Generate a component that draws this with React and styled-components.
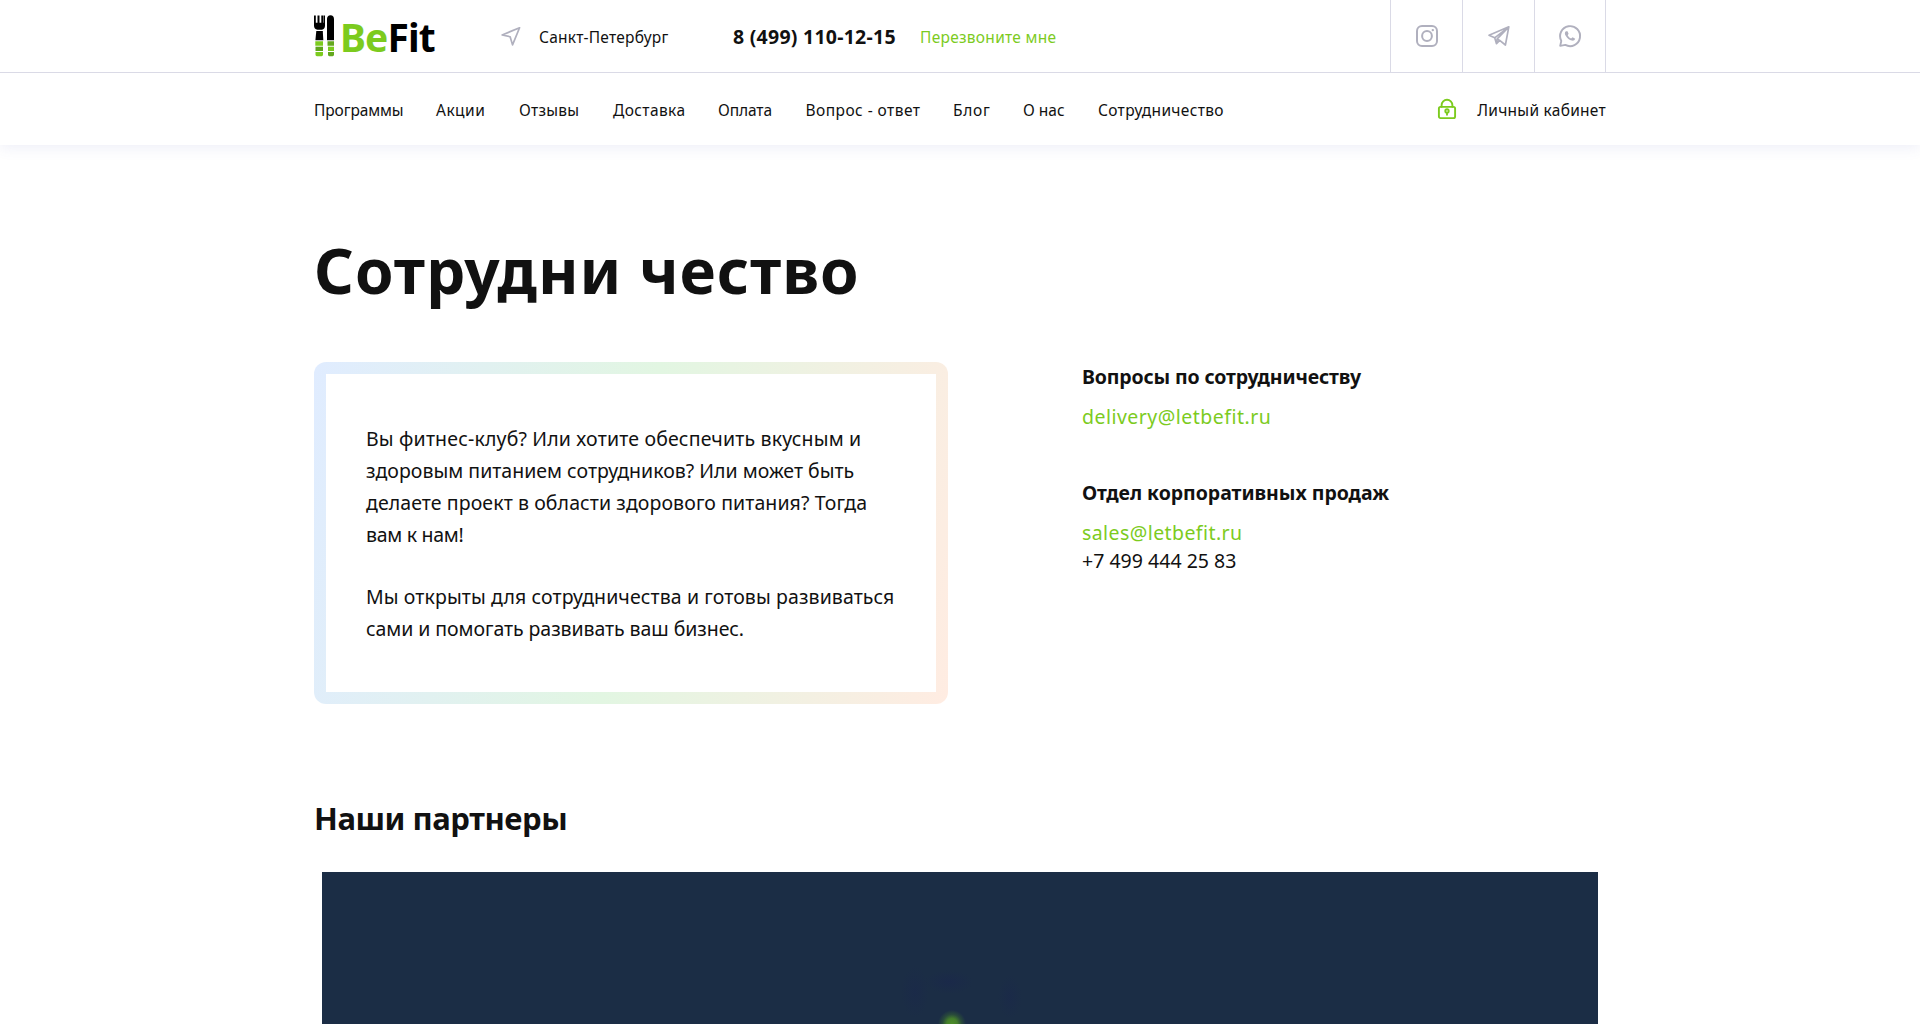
import React from "react";
import styled, { createGlobalStyle } from "styled-components";

const green = "#7ccb1e";
const ink = "#111111";
const muted = "#b0b0be";
const line = "#dadae6";

const GlobalStyle = createGlobalStyle`
  * { box-sizing: border-box; }
  html { overflow: hidden; }
  body {
    margin: 0;
    height: 1024px;
    overflow: hidden;
    background: #fff;
    color: ${ink};
    font-family: "Noto Sans", "Open Sans", sans-serif;
  }
  h1, h2, h3, p { margin: 0; }
  a { color: inherit; text-decoration: none; }
`;

const Header = styled.header`
  height: 145px;
  background: #fff;
  box-shadow: 0 2px 14px rgba(80, 90, 180, 0.11);
`;

const Container = styled.div`
  width: 1292px;
  margin: 0 auto;
`;

const TopBar = styled.div`
  height: 73px;
  border-bottom: 1px solid ${line};
`;

const TopInner = styled(Container)`
  display: flex;
  align-items: center;
  height: 72px;
`;

const Logo = styled.a`
  display: flex;
  align-items: center;
  width: 187px;
`;

const Cutlery = styled.svg`
  display: block;
  flex: none;
  width: 21px;
  height: 42px;
  margin-right: 5px;
`;

const LogoWord = styled.span`
  padding-top: 1px;
  font-size: 39px;
  line-height: 42px;
  font-weight: 700;
  letter-spacing: -0.9px;
  color: ${(p) => p.$color};
`;

const City = styled.span`
  width: 190px;
  margin-left: 18px;
  padding-top: 2px;
  font-size: 15.5px;
  line-height: 24px;
  letter-spacing: 0.25px;
  white-space: nowrap;
`;

const Phone = styled.a`
  width: 187px;
  margin-left: 4px;
  padding-top: 2px;
  font-size: 19.5px;
  line-height: 24px;
  font-weight: 700;
  letter-spacing: 0.25px;
  white-space: nowrap;
`;

const Callback = styled.a`
  padding-top: 2px;
  font-size: 15.5px;
  line-height: 24px;
  letter-spacing: 0.28px;
  color: ${green};
`;

const Socials = styled.div`
  display: flex;
  height: 72px;
  margin-left: auto;
  border-right: 1px solid ${line};
`;

const Social = styled.a`
  display: flex;
  align-items: center;
  justify-content: center;
  width: ${(p) => p.$width || 72}px;
  border-left: 1px solid ${line};
`;

const Icon = styled.svg`
  display: block;
  flex: none;
  overflow: visible;
  fill: none;
  stroke: ${(p) => p.$color || muted};
  stroke-width: ${(p) => p.$stroke || 2}px;
  stroke-linejoin: round;
  stroke-linecap: round;
`;

const NavBar = styled(Container)`
  display: flex;
  align-items: center;
  height: 72px;
`;

const Nav = styled.nav`
  display: flex;
  gap: 33px;
`;

const NavLink = styled.a`
  width: ${(p) => p.$width}px;
  padding-top: 2px;
  font-size: 15.5px;
  line-height: 24px;
  letter-spacing: ${(p) => p.$track || 0}px;
  white-space: nowrap;
`;

const Account = styled.a`
  display: flex;
  align-items: center;
  gap: 21px;
  margin-left: auto;
  font-size: 15.5px;
  line-height: 24px;
  letter-spacing: 0.27px;
`;

const AccountLabel = styled.span`
  padding-top: 2px;
`;

const Title = styled.h1`
  padding-top: 85px;
  margin-bottom: 52px;
  font-size: 62px;
  line-height: 80px;
  font-weight: 700;
  letter-spacing: 0.9px;
`;

const Columns = styled.div`
  display: flex;
  gap: 134px;
  height: 342px;
`;

const Card = styled.section`
  width: 634px;
  padding: 12px;
  border-radius: 12px;
  background: linear-gradient(100deg, #e0ecff 0%, #e2f6e2 50%, #ffece2 100%);
`;

const CardBody = styled.div`
  display: flex;
  flex-direction: column;
  gap: 30px;
  height: 318px;
  padding: 49px 0 0 40px;
  background: #fff;
`;

const Paragraph = styled.p`
  font-size: 19.5px;
  line-height: 32px;
`;

const TextLine = styled.span`
  display: block;
  letter-spacing: ${(p) => p.$track || 0}px;
  white-space: nowrap;
`;

const Contacts = styled.aside`
  display: flex;
  flex-direction: column;
  gap: 48px;
  padding-top: 1px;
  font-size: 19.5px;
  line-height: 28px;
`;

const ContactTitle = styled.h3`
  margin-bottom: 12px;
  font-size: inherit;
  font-weight: 700;
  letter-spacing: ${(p) => p.$track || 0}px;
`;

const ContactLine = styled.a`
  display: block;
  letter-spacing: ${(p) => p.$track || 0}px;
  color: ${(p) => p.$color || ink};
`;

const Subtitle = styled.h2`
  margin: 94px 0 34px;
  font-size: 31px;
  line-height: 40px;
  font-weight: 700;
  letter-spacing: -0.45px;
`;

const Partner = styled.div`
  height: 152px;
  margin: 0 8px;
  background:
    radial-gradient(circle 14px at 630px 152px, #4d8d29 0%, #457f2b 38%, rgba(50, 94, 52, 0.6) 68%, rgba(28, 45, 69, 0) 100%),
    radial-gradient(ellipse 14px 26px at 593px 120px, rgba(26, 40, 74, 0.6), rgba(26, 40, 74, 0)),
    radial-gradient(ellipse 24px 12px at 627px 110px, rgba(26, 40, 74, 0.8), rgba(26, 40, 74, 0)),
    radial-gradient(ellipse 12px 22px at 688px 125px, rgba(26, 40, 74, 0.6), rgba(26, 40, 74, 0)),
    #1b2d45;
`;

const navItems = [
  ["Программы", 89, -0.1],
  ["Акции", 50, 0.5],
  ["Отзывы", 61, 0.25],
  ["Доставка", 72, 0.4],
  ["Оплата", 54.5, -0.1],
  ["Вопрос - ответ", 114.5, 0.45],
  ["Блог", 37, 0.7],
  ["О нас", 42, 0],
  ["Сотрудничество", 126, 0.32],
];

const paragraphs = [
  [
    ["Вы фитнес-клуб? Или хотите обеспечить вкусным и", 0.17],
    ["здоровым питанием сотрудников? Или может быть", 0.01],
    ["делаете проект в области здорового питания? Тогда", 0.09],
    ["вам к нам!", -0.3],
  ],
  [
    ["Мы открыты для сотрудничества и готовы развиваться", 0.1],
    ["сами и помогать развивать ваш бизнес.", -0.07],
  ],
];

function CutleryMark() {
  return (
    <Cutlery viewBox="0 0 21 42">
      <path d="M0 .5h1.8v7.3h1.7V.5h2v7.3h1.8V.5h1.7v7.3h.4V.5H11v10.2c0 2.3-1.3 3.6-3 4.1H3.4C1.3 14.2 0 12.9 0 10.7z" fill="#000" />
      <path d="M2.3 16h6.500l.5 9.200H1.400z" fill="#000" />
      <path d="M13 4C13 1.500 14.300.2 16.500.2S20 1.500 20 4v21.200h-7z" fill="#000" />
      <path d="M1.300 26.200h7.700v4.500H1.300zM1.500 37h7.500v2.800q0 1.400-1.400 1.400H2.900q-1.400 0-1.400-1.400z" fill="#7ccb1e" />
      <path d="M1.500 31.700h7.500v4.300H1.500z" fill="#5fa51c" />
      <path d="M14 31.700h6v4.300h-6z" fill="#7ccb1e" />
      <path d="M13.500 26.200H20v4.500h-6.500zM14 37h6v2.800q0 1.400-1.400 1.400h-3.200q-1.400 0-1.400-1.400z" fill="#63a81e" />
    </Cutlery>
  );
}

export default function App() {
  return (
    <>
      <GlobalStyle />
      <Header>
        <TopBar>
          <TopInner>
            <Logo href="#">
              <CutleryMark />
              <LogoWord $color={green}>Be</LogoWord>
              <LogoWord $color="#000">Fit</LogoWord>
            </Logo>
            <Icon width="20" height="21" viewBox="0 0 21 22" $stroke={1.8}>
              <path d="M19.500 1.800 1.200 9.400l8.400 1.900 2.500 8.500z" />
            </Icon>
            <City>Санкт-Петербург</City>
            <Phone href="#">8 (499) 110-12-15</Phone>
            <Callback href="#">Перезвоните мне</Callback>
            <Socials>
              <Social href="#">
                <Icon width="22" height="22" viewBox="0 0 22 22">
                  <rect x="1" y="1" width="20" height="20" rx="5" />
                  <circle cx="11" cy="11" r="4.900" />
                  <circle cx="16.800" cy="5.100" r="1.200" fill={muted} stroke="none" style={{ strokeWidth: 0 }} />
                </Icon>
              </Social>
              <Social href="#">
                <Icon width="22" height="22" viewBox="0 0 22 22" $stroke={1.7}>
                  <path d="M20.800 1.800 1 10.200l5.700 2.600 1.800 5.900 3.200-3.300 5.700 4.600zM6.700 12.800 20.800 1.800 9.200 13.900l-.7 4.800M9.200 13.900l2.500 1.500" />
                </Icon>
              </Social>
              <Social href="#" $width={71}>
                <Icon width="22" height="22" viewBox="0 0 22 22" $stroke={1.9}>
                  <path d="M1.200 20.900l1.100-5A10 10 0 1 1 6.300 19.900z" />
                  <path d="M7 6.200c-1.500.8-1.400 2.700-.3 4.500 1.500 2.600 3.600 4.300 6.200 4.900 1.500.3 2.900-.4 3.300-1.900l-2.600-1.500-1.500 1.300c-1.500-.6-2.700-1.800-3.400-3.300l.9-1.400-1.100-2.600z" fill={muted} stroke="none" />
                </Icon>
              </Social>
            </Socials>
          </TopInner>
        </TopBar>
        <NavBar>
          <Nav>
            {navItems.map(([label, width, track]) => (
              <NavLink key={label} href="#" $width={width} $track={track}>
                {label}
              </NavLink>
            ))}
          </Nav>
          <Account href="#">
            <Icon $color={green} $stroke={1.9} width="18" height="20" viewBox="0 0 18 20">
              <rect x=".9" y="7.900" width="16.200" height="11.200" rx="1.600" />
              <path d="M3.600 7.700V6.200a5.400 5.400 0 0 1 10.800 0v1.500" />
              <circle cx="9" cy="12" r="1.700" />
              <path d="M9 14v1.800" />
            </Icon>
            <AccountLabel>Личный кабинет</AccountLabel>
          </Account>
        </NavBar>
      </Header>

      <Container as="main">
        <Title>Сотрудни чество</Title>
        <Columns>
          <Card>
            <CardBody>
              {paragraphs.map((lines, i) => (
                <Paragraph key={i}>
                  {lines.map(([text, track]) => (
                    <TextLine key={text} $track={track}>
                      {text}
                    </TextLine>
                  ))}
                </Paragraph>
              ))}
            </CardBody>
          </Card>
          <Contacts>
            <div>
              <ContactTitle $track={-0.14}>Вопросы по сотрудничеству</ContactTitle>
              <ContactLine href="#" $color={green} $track={0.48}>
                delivery@letbefit.ru
              </ContactLine>
            </div>
            <div>
              <ContactTitle $track={-0.03}>Отдел корпоративных продаж</ContactTitle>
              <ContactLine href="#" $color={green} $track={0.42}>
                sales@letbefit.ru
              </ContactLine>
              <ContactLine href="#" $track={0.02}>
                +7 499 444 25 83
              </ContactLine>
            </div>
          </Contacts>
        </Columns>
        <Subtitle>Наши партнеры</Subtitle>
        <Partner />
      </Container>
    </>
  );
}
